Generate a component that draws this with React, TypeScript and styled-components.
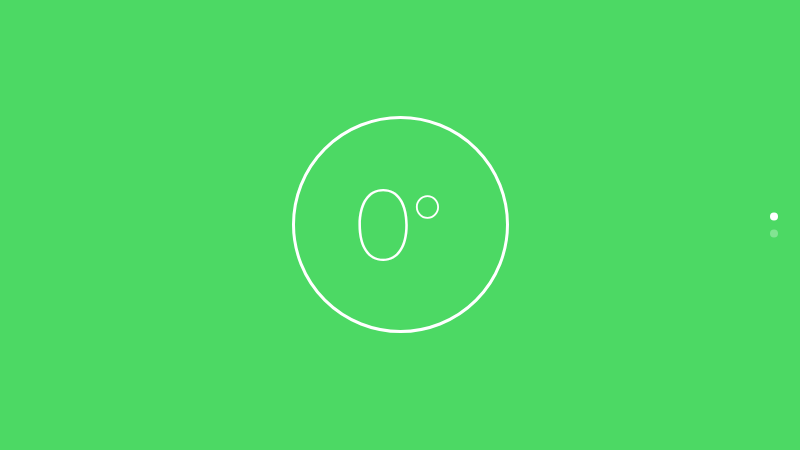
import React from "react";
import styled, { createGlobalStyle } from "styled-components";

const Global = createGlobalStyle`
  html, body { margin: 0; padding: 0; background: #4cd964; }
  body { font-family: Inter, "Liberation Sans", sans-serif; }
`;

const Screen = styled.div`
  position: relative;
  width: 800px;
  height: 450px;
  background: #4cd964;
  display: flex;
  align-items: center;
  justify-content: center;
  overflow: hidden;
`;

const Ring = styled.div`
  box-sizing: border-box;
  width: 217px;
  height: 217px;
  margin-top: -1px;
  border: 3px solid #fff;
  border-radius: 50%;
  display: flex;
  align-items: center;
  justify-content: center;
`;

const Reading = styled.div`
  display: flex;
  align-items: flex-start;
  color: #fff;
  font-family: Inter, "Liberation Sans", sans-serif;
  font-weight: 118;
  line-height: 1;
  margin-left: 1px;
`;

const Digits = styled.span`
  display: inline-block;
  font-size: 96px;
  transform: scaleX(1.15);
  transform-origin: right center;
`;

const Degree = styled.span`
  display: inline-block;
  font-size: 78px;
  margin-top: 9px;
  text-indent: -6px;
  width: 26px;
  white-space: nowrap;
`;

const Pager = styled.div`
  position: absolute;
  right: 22px;
  top: 50%;
  transform: translateY(-50%);
  display: flex;
  flex-direction: column;
  gap: 9px;
`;

const Dot = styled.span<{ $active?: boolean }>`
  width: 8px;
  height: 8px;
  border-radius: 50%;
  background: #fff;
  opacity: ${(p) => (p.$active ? 1 : 0.3)};
`;

export default function App() {
  return (
    <>
      <Global />
      <Screen>
        <Ring>
          <Reading>
            <Digits>0</Digits>
            <Degree>°</Degree>
          </Reading>
        </Ring>
        <Pager>
          <Dot $active />
          <Dot />
        </Pager>
      </Screen>
    </>
  );
}
